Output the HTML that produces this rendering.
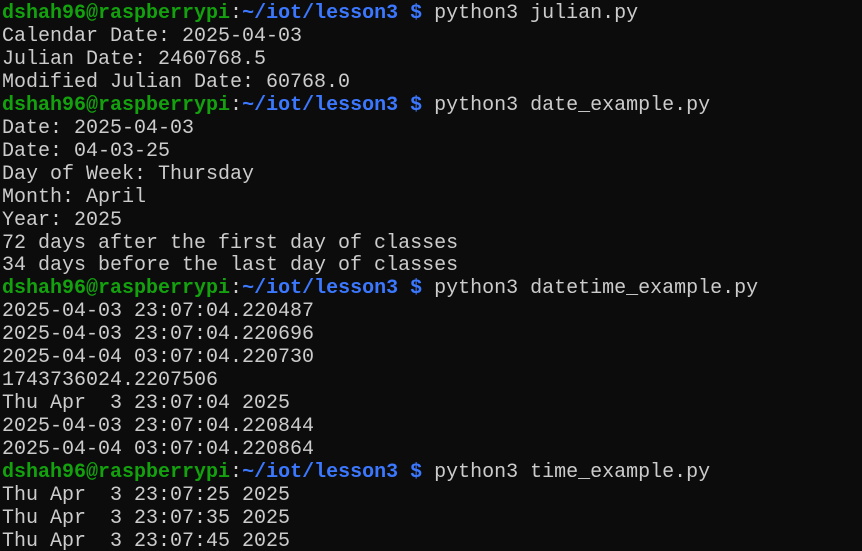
<!DOCTYPE html>
<html><head><meta charset="utf-8"><style>
html,body{margin:0;padding:0;background:#0c0c0c;width:862px;height:551px;overflow:hidden}
pre{margin:0;padding:0 0 0 2px;font-family:"Liberation Mono",monospace;font-size:20px;line-height:22.96px;color:#cccccc;white-space:pre;position:relative;top:3px}
.g{color:#13a10e;font-weight:bold}.b{color:#3b78ff;font-weight:bold}.w{color:#cccccc}
</style></head><body><pre><span class="g">dshah96@raspberrypi</span>:<span class="b">~/iot/lesson3 $</span> python3 julian.py
Calendar Date: 2025-04-03
Julian Date: 2460768.5
Modified Julian Date: 60768.0
<span class="g">dshah96@raspberrypi</span>:<span class="b">~/iot/lesson3 $</span> python3 date_example.py
Date: 2025-04-03
Date: 04-03-25
Day of Week: Thursday
Month: April
Year: 2025
72 days after the first day of classes
34 days before the last day of classes
<span class="g">dshah96@raspberrypi</span>:<span class="b">~/iot/lesson3 $</span> python3 datetime_example.py
2025-04-03 23:07:04.220487
2025-04-03 23:07:04.220696
2025-04-04 03:07:04.220730
1743736024.2207506
Thu Apr  3 23:07:04 2025
2025-04-03 23:07:04.220844
2025-04-04 03:07:04.220864
<span class="g">dshah96@raspberrypi</span>:<span class="b">~/iot/lesson3 $</span> python3 time_example.py
Thu Apr  3 23:07:25 2025
Thu Apr  3 23:07:35 2025
Thu Apr  3 23:07:45 2025</pre></body></html>
